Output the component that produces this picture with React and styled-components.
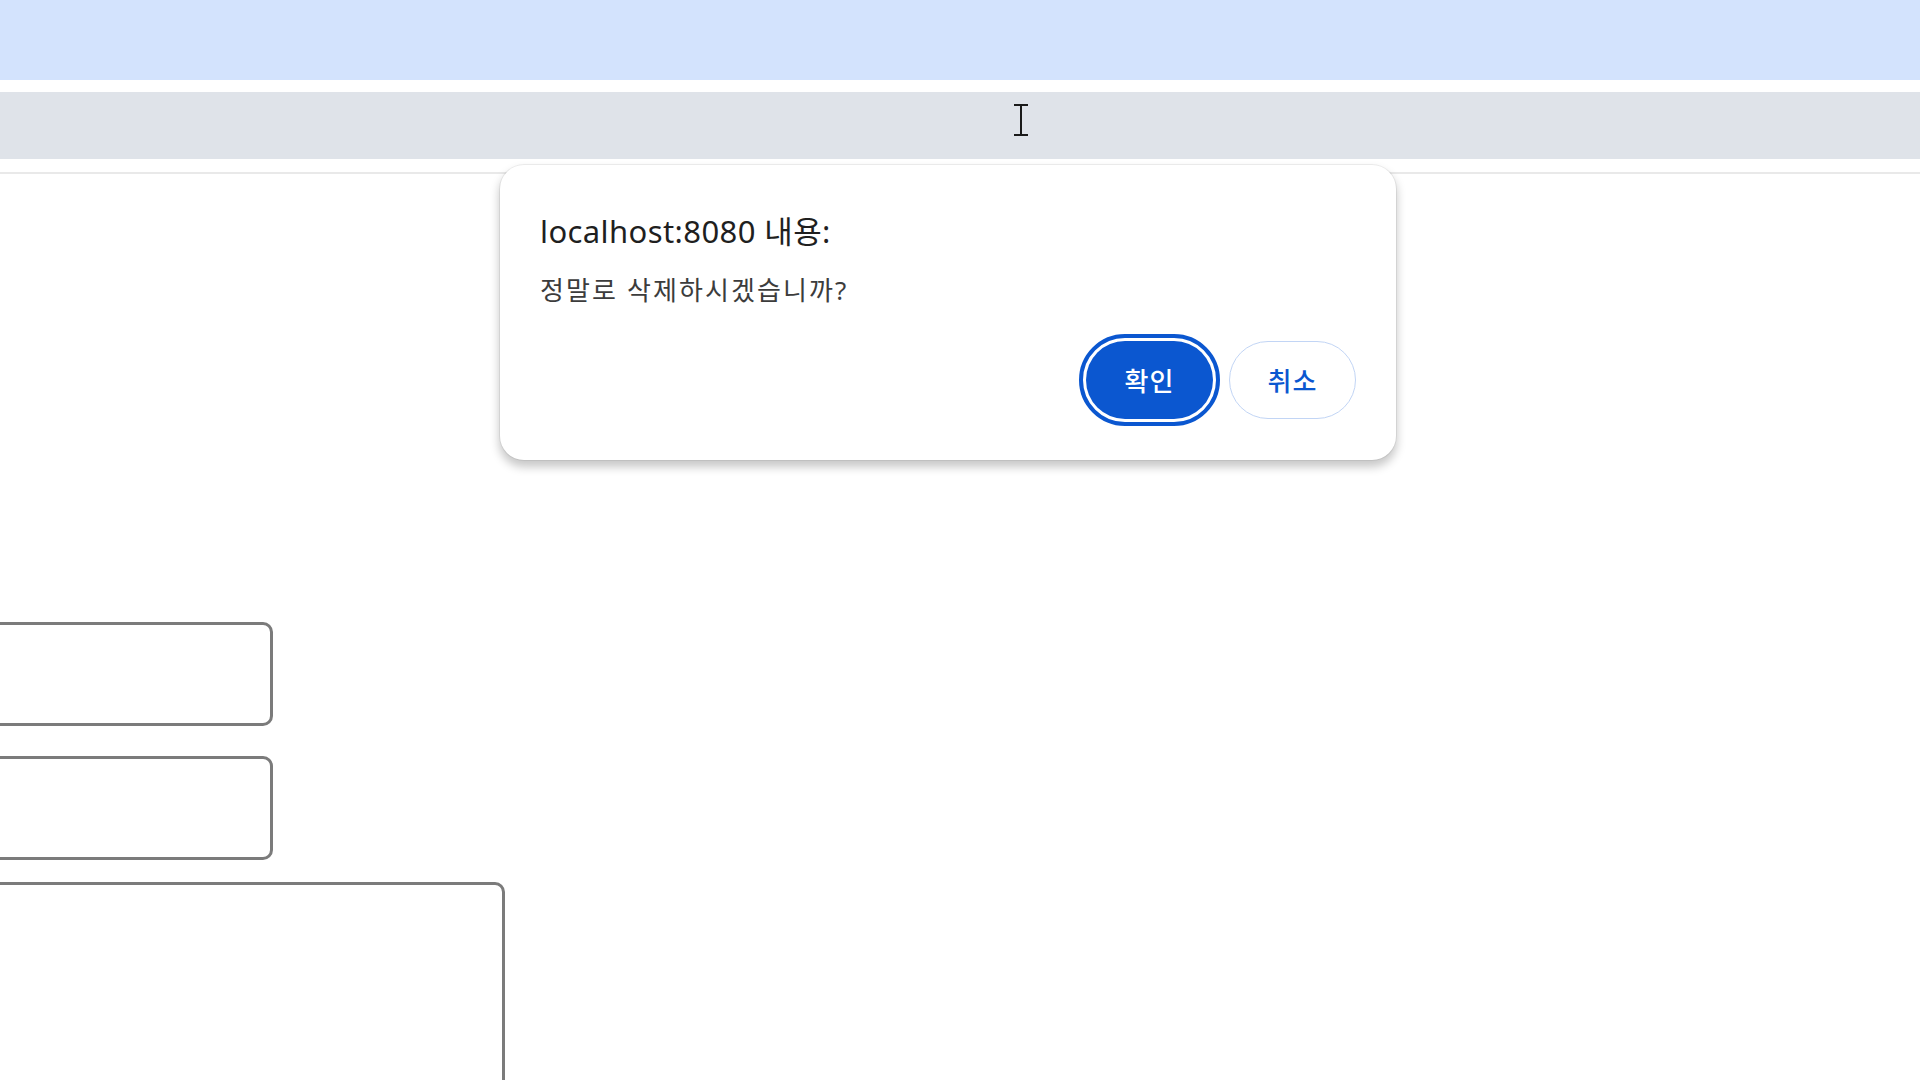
import styled, { createGlobalStyle } from "styled-components";

const GlobalStyle = createGlobalStyle`
    html, body {
        margin: 0;
        padding: 0;
        background: #ffffff;
        overflow: hidden;
    }
    body {
        font-family: "Noto Sans", "Noto Sans CJK KR", sans-serif;
    }
`;

const Page = styled("div")`
    position: relative;
    width: 1920px;
    height: 1080px;
    overflow: hidden;
    background: #ffffff;
`;

const TabStrip = styled("div")`
    height: 80px;
    background-color: #d3e3fd;
`;

const AddressBar = styled("div")`
    position: relative;
    margin-top: 12px;
    height: 67px;
    background-color: #dfe3e9;
`;

const Divider = styled("div")`
    margin-top: 13px;
    height: 2px;
    background-color: #e9e9e9;
`;

const Content = styled("div")`
    position: relative;
`;

const Form = styled("div")`
    display: flex;
    flex-direction: column;
    padding-top: 448px;
    margin-left: -100px;
`;

const Field = styled("div")`
    box-sizing: border-box;
    width: ${(props) => props.$width}px;
    height: ${(props) => props.$height}px;
    margin-bottom: ${(props) => props.$gap || 0}px;
    border: 3px solid #7b7b7b;
    border-radius: 10px;
    background: #ffffff;
`;

const Caret = styled("svg")`
    position: absolute;
    left: 1014px;
    top: 12px;
`;

const Dialog = styled("div")`
    position: absolute;
    left: 500px;
    top: -9px;
    box-sizing: border-box;
    width: 896px;
    padding: 46px 40px 41px 40px;
    background: #ffffff;
    border-radius: 24px;
    box-shadow: 0 0 0 1px rgba(0, 0, 0, 0.06), 0 6px 10px 1px rgba(0, 0, 0, 0.22);
    display: flex;
    flex-direction: column;
`;

const Title = styled("div")`
    font-size: 31px;
    line-height: 40px;
    letter-spacing: 0.4px;
    color: #1f1f1f;
`;

const Message = styled("div")`
    margin-top: 21px;
    font-size: 26px;
    line-height: 36px;
    letter-spacing: 2.1px;
    color: #3c3c3c;
`;

const ButtonRow = styled("div")`
    display: flex;
    justify-content: flex-end;
    gap: 16px;
    margin-top: 33px;
`;

const DialogButton = styled("button")`
    box-sizing: border-box;
    width: 127px;
    height: 78px;
    border-radius: 39px;
    font-family: "Noto Sans", "Noto Sans CJK KR", sans-serif;
    font-size: 26px;
    font-weight: 500;
    letter-spacing: 1px;
    cursor: pointer;
    background: ${(props) => (props.$primary ? "#0b57d0" : "#ffffff")};
    color: ${(props) => (props.$primary ? "#ffffff" : "#0b57d0")};
    border: ${(props) => (props.$primary ? "none" : "1.5px solid #c2d5f5")};
    outline: ${(props) => (props.$primary ? "4px solid #0b57d0" : "none")};
    outline-offset: 3px;
`;

function TextCaret() {
    return (
        <Caret width="14" height="32" viewBox="0 0 14 32">
            <path d="M0 1h14M0 31h14M7 1v30" stroke="#1a1a1a" strokeWidth="2" fill="none" />
        </Caret>
    );
}

function ConfirmDialog() {
    return (
        <Dialog>
            <Title>localhost:8080 내용:</Title>
            <Message>정말로 삭제하시겠습니까?</Message>
            <ButtonRow>
                <DialogButton $primary>확인</DialogButton>
                <DialogButton>취소</DialogButton>
            </ButtonRow>
        </Dialog>
    );
}

export default function App() {
    return (
        <Page>
            <GlobalStyle />
            <TabStrip />
            <AddressBar>
                <TextCaret />
            </AddressBar>
            <Divider />
            <Content>
                <Form>
                    <Field $width={373} $height={104} $gap={30} />
                    <Field $width={373} $height={104} $gap={22} />
                    <Field $width={605} $height={320} />
                </Form>
                <ConfirmDialog />
            </Content>
        </Page>
    );
}
